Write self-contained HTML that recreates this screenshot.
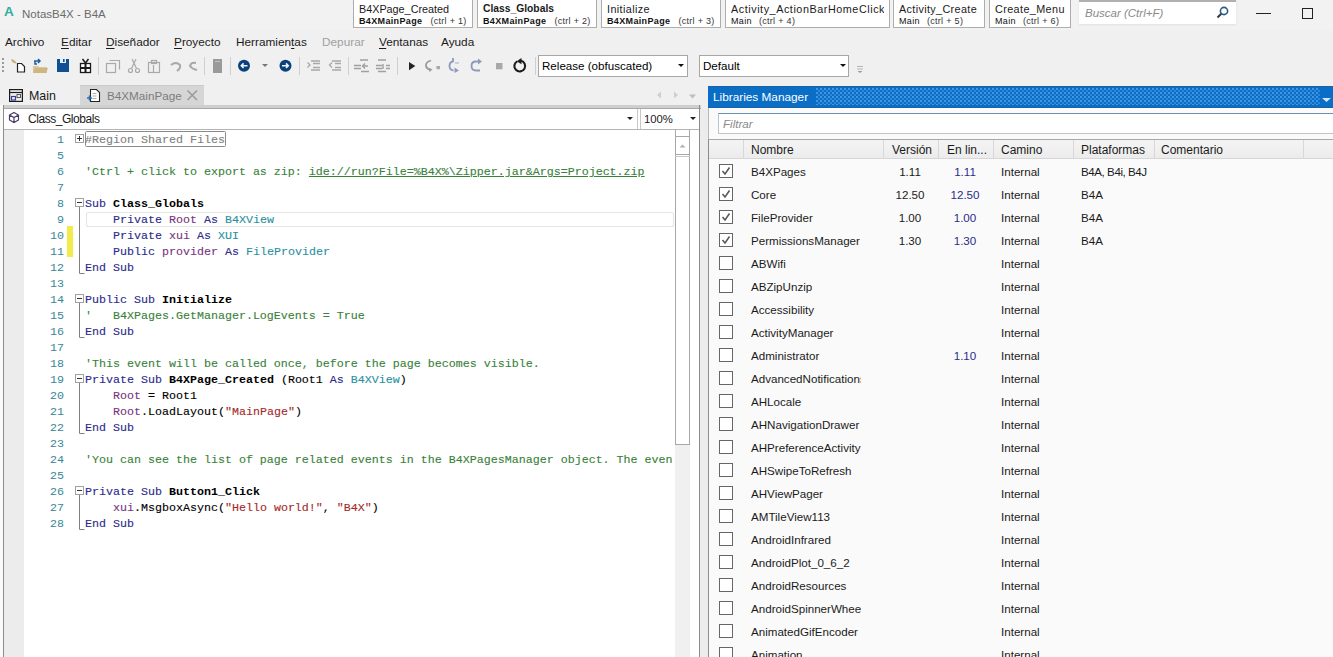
<!DOCTYPE html>
<html><head><meta charset="utf-8">
<style>
*{margin:0;padding:0;box-sizing:border-box}
html,body{width:1333px;height:657px;overflow:hidden;background:#f0f0f0;font-family:"Liberation Sans",sans-serif;font-size:12px;color:#000}
.a{position:absolute}
.t{position:absolute;white-space:nowrap;line-height:14px}
svg{position:absolute;overflow:visible}
.qt{position:absolute;top:-1px;height:29px;background:#fff;border:1px solid #adadad;overflow:hidden}
.qt .l1{position:absolute;left:5px;top:2px;font-size:10.8px;line-height:14px;color:#1a1a1a;white-space:nowrap}
.qt .l2{position:absolute;left:5px;top:16px;font-size:9px;letter-spacing:0.35px;line-height:11px;color:#111;white-space:nowrap}
.qt .l2.b{font-weight:bold;-webkit-text-stroke:0}
.qt .l2 span{color:#333;margin-left:8px;letter-spacing:0.3px}
.menu span{position:absolute;top:35px;font-size:11.8px;line-height:14px;color:#1b1b1b;white-space:nowrap}
.menu u{text-decoration:underline;text-underline-offset:1.5px;text-decoration-thickness:1px}
.sep{position:absolute;top:57px;width:1px;height:18px;background:#cfcfcf}
.code{position:absolute;left:85px;font-family:"Liberation Mono",monospace;font-size:11.67px;white-space:pre;line-height:16px;height:16px;color:#000;-webkit-text-stroke:0.12px currentColor}
.ln{position:absolute;right:1269px;font-family:"Liberation Mono",monospace;font-size:11.67px;white-space:pre;line-height:16px;color:#3a8599}
.k{color:#2b2b8c}.v{color:#7a3580}.ty{color:#2b91a0}.c{color:#3a823a}.s{color:#a52a2a}.b{font-weight:bold;-webkit-text-stroke:0}
.row{position:absolute;left:708px;width:625px;height:23px}
.cb{position:absolute;left:719px;width:14px;height:14px;border:1px solid #666;background:#fff}
.nm{position:absolute;left:751px;width:110px;overflow:hidden;white-space:nowrap;font-size:11.6px;line-height:14px;color:#1a1a1a}
.ver{position:absolute;width:60px;text-align:center;white-space:nowrap;font-size:11.6px;line-height:14px}
.cam{position:absolute;left:1001px;white-space:nowrap;font-size:11.6px;line-height:14px;color:#1a1a1a}
.pl{position:absolute;left:1081px;white-space:nowrap;font-size:11.6px;line-height:14px;color:#1a1a1a}
.hd{position:absolute;top:143px;white-space:nowrap;font-size:12px;line-height:14px;color:#1a1a1a}
.hs{position:absolute;top:140px;width:1px;height:19px;background:#d8d8d8}
</style></head><body>
<!-- ===== TITLE BAR ===== -->
<div class="a" style="left:0;top:0;width:1333px;height:30px;background:#f2f2f2"></div>
<div class="t" style="left:4px;top:5px;font-size:13.6px;font-weight:bold;color:#2fae9f">A</div>
<div class="t" style="left:22px;top:7px;font-size:11.5px;color:#6b6b6b">NotasB4X - B4A</div>

<div class="qt" style="left:353px;width:120px"><div class="l1">B4XPage_Created</div><div class="l2"><b>B4XMainPage</b><span>(ctrl + 1)</span></div></div>
<div class="qt" style="left:477px;width:120px"><div class="l1" style="font-weight:bold;font-size:10.3px">Class_Globals</div><div class="l2"><b>B4XMainPage</b><span>(ctrl + 2)</span></div></div>
<div class="qt" style="left:601px;width:120px"><div class="l1" style="letter-spacing:0.4px">Initialize</div><div class="l2"><b>B4XMainPage</b><span>(ctrl + 3)</span></div></div>
<div class="qt" style="left:725px;width:165px"><div class="l1" style="letter-spacing:0.55px;width:153px;overflow:hidden">Activity_ActionBarHomeClick</div><div class="l2">Main<span style="margin-left:7px">(ctrl + 4)</span></div></div>
<div class="qt" style="left:893px;width:92px"><div class="l1" style="letter-spacing:0.36px">Activity_Create</div><div class="l2">Main<span style="margin-left:7px">(ctrl + 5)</span></div></div>
<div class="qt" style="left:989px;width:82px"><div class="l1" style="letter-spacing:0.4px">Create_Menu</div><div class="l2">Main<span style="margin-left:7px">(ctrl + 6)</span></div></div>

<div class="a" style="left:1079px;top:0;width:157px;height:24px;background:#fff;border-top:2px solid #b0b0b0;box-shadow:0 1px 2px #e0e0e0"></div>
<div class="t" style="left:1085px;top:6px;font-size:11.5px;font-style:italic;color:#8a8a8a">Buscar (Ctrl+F)</div>
<svg style="left:1216px;top:5px" width="14" height="14"><circle cx="8" cy="6" r="3.6" fill="none" stroke="#2c5a86" stroke-width="1.6"/><line x1="5.3" y1="8.7" x2="1.5" y2="12.5" stroke="#2c3e50" stroke-width="2"/></svg>
<div class="a" style="left:1256px;top:13px;width:15px;height:1px;background:#222"></div>
<div class="a" style="left:1302px;top:8px;width:11px;height:11px;border:1px solid #222"></div>

<!-- ===== MENU ===== -->
<div class="menu">
<span style="left:5px">Archivo</span>
<span style="left:61px"><u>E</u>ditar</span>
<span style="left:106px"><u>D</u>iseñador</span>
<span style="left:174px"><u>P</u>royecto</span>
<span style="left:236px">Herramien<u>t</u>as</span>
<span style="left:322px;color:#a0a0a0">Depurar</span>
<span style="left:379px"><u>V</u>entanas</span>
<span style="left:441px">Ayuda</span>
</div>

<!-- ===== TOOLBAR ===== -->
<svg style="left:0;top:0" width="1333" height="84">
 <!-- grip -->
 <g fill="#9a9a9a"><rect x="2" y="58" width="2" height="2"/><rect x="2" y="62" width="2" height="2"/><rect x="2" y="66" width="2" height="2"/><rect x="2" y="70" width="2" height="2"/></g>
 <!-- new -->
 <path d="M11 59 L15 61 L13 63 Z" fill="#b9a56a"/><path d="M12 60 l4 3" stroke="#c8b27a" stroke-width="2"/>
 <path d="M17.5 63.5 h4 l3 3 v5.5 h-7 z" fill="#fff" stroke="#222" stroke-width="1.2"/>
 <!-- open -->
 <path d="M34 61 h6 M38 59 l2 2 l-2 2 M35 61 v3 l2 0" fill="none" stroke="#1d5ea8" stroke-width="1.5"/>
 <path d="M33 66 h5 l1 1 h8 v6 h-14 z" fill="#d9c79a"/><path d="M35 68 h13 l-2 5 h-13 z" fill="#cdb684"/>
 <!-- save -->
 <path d="M57 59 h12 v13 h-12 z" fill="#0f4f92"/><rect x="60" y="59" width="6" height="4" fill="#e6eef8"/><rect x="63" y="59" width="1.6" height="3" fill="#0f4f92"/>
 <!-- gift -->
 <rect x="80.5" y="63.5" width="10" height="9" fill="#fff" stroke="#1a1a1a" stroke-width="1.3"/><path d="M85.5 63 v10 M80 68 h11" stroke="#1a1a1a" stroke-width="2"/><path d="M82.5 59 l3 4 l3 -4" fill="none" stroke="#1a1a1a" stroke-width="1.5"/>
 <rect x="98" y="57" width="1" height="18" fill="#cfcfcf"/>
 <!-- copy -->
 <g fill="none" stroke="#a9a9a9" stroke-width="1.2"><rect x="106.5" y="63.5" width="9" height="9"/><path d="M109.5 60.5 h10 v9"/></g>
 <!-- cut -->
 <g fill="none" stroke="#a9a9a9" stroke-width="1.2"><circle cx="130.5" cy="70.5" r="2"/><circle cx="137.5" cy="70.5" r="2"/><path d="M131.5 68.5 L136 59 M136.5 68.5 L132 59"/></g>
 <!-- paste -->
 <g fill="none" stroke="#a9a9a9" stroke-width="1.2"><rect x="148.5" y="62.5" width="11" height="10"/><rect x="151.5" y="60.5" width="5" height="3"/><path d="M153.5 65 v7"/></g>
 <!-- undo redo -->
 <path d="M171 65 q5 -4 9 0 q1 3 -3 6" fill="none" stroke="#a9a9a9" stroke-width="2"/>
 <path d="M196 63 q-5 -1 -6 3 q2 3 7 4" fill="none" stroke="#a9a9a9" stroke-width="2"/>
 <rect x="204" y="57" width="1" height="18" fill="#cfcfcf"/>
 <rect x="213" y="59" width="9" height="14" fill="#9a9a9a"/><rect x="215" y="61" width="5" height="1" fill="#c0c0c0"/>
 <rect x="230" y="57" width="1" height="18" fill="#cfcfcf"/>
 <!-- back / fwd -->
 <circle cx="244" cy="65.7" r="6" fill="#0c4078"/><path d="M247.5 65.7 h-6 M243.6 63.4 l-2.3 2.3 l2.3 2.3" fill="none" stroke="#e8f4ff" stroke-width="1.6"/>
 <path d="M262 64 h6 l-3 3 z" fill="#777"/>
 <circle cx="285.5" cy="65.7" r="6" fill="#0c4078"/><path d="M282 65.7 h6 M286 63.4 l2.3 2.3 l-2.3 2.3" fill="none" stroke="#e8f4ff" stroke-width="1.6"/>
 <rect x="299" y="57" width="1" height="18" fill="#cfcfcf"/>
 <!-- indent/outdent -->
 <g stroke="#a8a8a8" stroke-width="1.3"><path d="M311 61 h9 M313 63.5 h7 M313 67.5 h7 M311 70 h9"/><path d="M307.5 62.5 l2.5 2.5 l-2.5 2.5" fill="none"/></g>
 <g stroke="#a8a8a8" stroke-width="1.3"><path d="M332 61 h9 M335 63.5 h6 M335 67.5 h6 M332 70 h9"/><path d="M332 62.5 l-2.5 2.5 l2.5 2.5" fill="none"/></g>
 <rect x="348" y="57" width="1" height="18" fill="#cfcfcf"/>
 <g stroke="#a0a0a0" stroke-width="1.4" fill="none"><path d="M360 60 h8 M354 65.5 h7 M354 68.5 h7 M361 71.5 h8"/><path d="M368 66 h-5 M365 63.5 l-2.5 2.5 l2.5 2.5"/></g>
 <g stroke="#a0a0a0" stroke-width="1.4" fill="none"><path d="M378 60 h8 M376 65.5 h6 M376 68.5 h6 M378 71.5 h8 M386 65.5 h4 M386 68.5 h4"/><path d="M383 64 v5"/></g>
 <rect x="397" y="57" width="1" height="18" fill="#cfcfcf"/>
 <!-- debug -->
 <path d="M409 62 l6.3 4.1 l-6.3 4.1 z" fill="#222"/>
 <path d="M431 60.5 q-5.5 1.5 -5 5.5 q0.5 2.5 3.5 3.5" fill="none" stroke="#9a9a9a" stroke-width="1.8"/><path d="M428.5 67.5 l4 2 l-3 2.5z" fill="#9a9a9a"/><rect x="436.5" y="66" width="3.5" height="3.2" fill="#a8a8a8"/>
 <path d="M453 58 v3.5 q-3.5 0.5 -3.5 4.5 q0 4 4 4.5" fill="none" stroke="#8f9ab8" stroke-width="1.8"/><path d="M454.5 67.5 l4.5 3 l-4.5 2.5z" fill="#8f9ab8"/><path d="M455 63 h4" stroke="#b6bfd8" stroke-width="1.4"/>
 <path d="M480 61.5 h-4 q-4.5 0 -4.5 4.5 q0 4.5 4.5 4.5 h4" fill="none" stroke="#8f9ab8" stroke-width="1.8"/><path d="M478 58.5 l4 3 l-4 3z" fill="#8f9ab8"/>
 <rect x="496" y="63" width="6.5" height="6.3" fill="#a8a8a8"/>
 <path d="M517.2 61.3 a5.4 5.4 0 1 0 3.8 -0.5" fill="none" stroke="#1a1a1a" stroke-width="2.1"/><path d="M521.5 58 l-4.8 3.2 l4.8 3z" fill="#1a1a1a"/>
 <rect x="535" y="57" width="1" height="18" fill="#cfcfcf"/>
 <!-- overflow -->
 <path d="M857 66.5 h6 M857 69 h6" stroke="#b5b5b5" stroke-width="1"/><path d="M857.5 71 h5 l-2.5 2z" fill="#9a9a9a"/>
</svg>

<!-- dropdowns -->
<div class="a" style="left:538px;top:55px;width:150px;height:22px;background:#fff;border:1px solid #a6a6a6"></div>
<div class="t" style="left:542px;top:59px;font-size:11.6px">Release (obfuscated)</div>
<div class="a" style="left:678px;top:64px;width:0;height:0;border-left:3px solid transparent;border-right:3px solid transparent;border-top:3px solid #111"></div>
<div class="a" style="left:699px;top:55px;width:150px;height:22px;background:#fff;border:1px solid #a6a6a6"></div>
<div class="t" style="left:703px;top:59px;font-size:11.6px">Default</div>
<div class="a" style="left:840px;top:64px;width:0;height:0;border-left:3px solid transparent;border-right:3px solid transparent;border-top:3px solid #111"></div>

<!-- ===== EDITOR TABS ===== -->
<div class="a" style="left:80px;top:85px;width:124px;height:20px;background:#d6d6d6;border-top:1px solid #cacaca"></div>
<svg style="left:0;top:0" width="260" height="110">
 <g fill="none" stroke="#1a1a1a" stroke-width="1.2"><rect x="9.6" y="89.6" width="12.8" height="11.8"/><path d="M9.6 92.5 h12.8"/></g>
 <rect x="11.5" y="96.5" width="4" height="3.5" fill="none" stroke="#3d3d9a" stroke-width="1.2"/><rect x="17" y="94.5" width="3.5" height="3" fill="none" stroke="#555" stroke-width="1"/>
 <path d="M90.5 89.5 h6 l3 3 v9 h-9 z" fill="#fff" stroke="#222" stroke-width="1.1"/><path d="M92.5 93.5 h4 M92.5 96 h4 M92.5 98.5 h4" stroke="#999" stroke-width="0.8"/>
 <path d="M87 98 h5 M89.5 95.5 v5" stroke="#2a6fc0" stroke-width="1.6"/>
 <path d="M187.5 90.5 l9.5 9.5 M197 90.5 l-9.5 9.5" stroke="#9c9c9c" stroke-width="1.6"/>
 <path d="M657 95 l4 -3.5 v7 z" fill="#cfcfcf"/><path d="M678 95 l-4 -3.5 v7 z" fill="#cfcfcf"/><path d="M689 94.5 h7 l-3.5 4 z" fill="#bdbdbd"/>
</svg>
<div class="t" style="left:29px;top:89px;font-size:12.4px;color:#1a1a1a">Main</div>
<div class="t" style="left:107px;top:89px;font-size:11.7px;color:#7c7c7c">B4XMainPage</div>

<!-- ===== EDITOR FRAME ===== -->
<div class="a" style="left:2px;top:105px;width:699px;height:552px;background:#fff"></div>
<div class="a" style="left:2px;top:105px;width:699px;height:4px;background:#cfcfcf"></div>
<div class="a" style="left:2px;top:108px;width:699px;height:1px;background:#a8a8a8"></div>
<div class="a" style="left:0px;top:105px;width:3px;height:552px;background:#fafafa"></div><div class="a" style="left:3px;top:105px;width:1px;height:552px;background:#8c8c8c"></div>
<div class="a" style="left:699px;top:105px;width:1px;height:552px;background:#8c8c8c"></div><div class="a" style="left:700px;top:109px;width:8px;height:548px;background:#ececec"></div>
<!-- combobox row -->
<div class="a" style="left:4px;top:129px;width:695px;height:1px;background:#b4b4b4"></div>
<div class="a" style="left:637px;top:109px;width:1px;height:20px;background:#c8c8c8"></div><div class="a" style="left:640px;top:109px;width:1px;height:20px;background:#c8c8c8"></div>
<svg style="left:0;top:0" width="700" height="135">
 <path d="M14 112.5 l4.5 2.5 v5 l-4.5 2.5 l-4.5 -2.5 v-5 z M9.5 115 l4.5 2.5 l4.5 -2.5 M14 117.5 v5" fill="none" stroke="#4a3a6a" stroke-width="1.2"/>
 <path d="M627 117 h6 l-3 3 z" fill="#222"/>
 <path d="M690 117 h6 l-3 3 z" fill="#222"/>
</svg>
<div class="t" style="left:28px;top:112px;font-size:12px;letter-spacing:-0.45px;color:#1a1a1a">Class_Globals</div>
<div class="t" style="left:644px;top:112px;font-size:11.3px;color:#1a1a1a">100%</div>
<!-- gutter -->
<div class="a" style="left:4px;top:130px;width:20px;height:527px;background:#ececec"></div>
<div class="a" style="left:67px;top:226px;width:6px;height:31px;background:#f3eb4a"></div>
<!-- scrollbar -->
<div class="a" style="left:675px;top:130px;width:15px;height:527px;background:#f0f0f0"></div>
<div class="a" style="left:675px;top:130px;width:15px;height:315px;background:#fff;border:1px solid #a8a8a8;border-top:none"></div>
<div class="a" style="left:675px;top:136px;width:15px;height:1px;background:#a8a8a8"></div>
<div class="a" style="left:675px;top:154px;width:15px;height:1px;background:#a8a8a8"></div>
<div class="a" style="left:675px;top:156px;width:15px;height:1px;background:#c8c8c8"></div>
<svg style="left:0;top:0" width="700" height="160"><path d="M679.5 147.5 h6 l-3 -3 z" fill="#b0b0b0"/></svg>
<!-- fold markers -->
<svg style="left:0;top:0" width="700" height="657">
 <g fill="#fff" stroke="#a0a0a0" stroke-width="1"><rect x="75.5" y="134.5" width="8" height="8"/><rect x="75.5" y="198.5" width="8" height="8"/><rect x="75.5" y="294.5" width="8" height="8"/><rect x="75.5" y="374.5" width="8" height="8"/><rect x="75.5" y="486.5" width="8" height="8"/></g>
 <g stroke="#333" stroke-width="1"><path d="M77 138.5 h5 M79.5 136 v5"/><path d="M77 202.5 h5"/><path d="M77 298.5 h5"/><path d="M77 378.5 h5"/><path d="M77 490.5 h5"/></g>
 <g fill="none" stroke="#808080" stroke-width="1"><path d="M79.5 207 v66.5 h5"/><path d="M79.5 303 v34.5 h5"/><path d="M79.5 383 v50.5 h5"/><path d="M79.5 495 v34.5 h5"/></g>
 <rect x="85.5" y="131.5" width="140" height="15" fill="none" stroke="#8a8a8a" stroke-width="1" rx="1"/>
 <rect x="86.5" y="212.5" width="587" height="14" fill="none" stroke="#e6e6e6" stroke-width="1.2" rx="2"/>
</svg>
<!-- line numbers -->
<div class="ln" style="top:132px">1</div>
<div class="ln" style="top:148px">5</div>
<div class="ln" style="top:164px">6</div>
<div class="ln" style="top:180px">7</div>
<div class="ln" style="top:196px">8</div>
<div class="ln" style="top:212px">9</div>
<div class="ln" style="top:228px">10</div>
<div class="ln" style="top:244px">11</div>
<div class="ln" style="top:260px">12</div>
<div class="ln" style="top:276px">13</div>
<div class="ln" style="top:292px">14</div>
<div class="ln" style="top:308px">15</div>
<div class="ln" style="top:324px">16</div>
<div class="ln" style="top:340px">17</div>
<div class="ln" style="top:356px">18</div>
<div class="ln" style="top:372px">19</div>
<div class="ln" style="top:388px">20</div>
<div class="ln" style="top:404px">21</div>
<div class="ln" style="top:420px">22</div>
<div class="ln" style="top:436px">23</div>
<div class="ln" style="top:452px">24</div>
<div class="ln" style="top:468px">25</div>
<div class="ln" style="top:484px">26</div>
<div class="ln" style="top:500px">27</div>
<div class="ln" style="top:516px">28</div>
<!-- code -->
<div class="code" style="top:132px;color:#808080">#Region Shared Files</div>
<div class="code c" style="top:164px">'Ctrl + click to export as zip: <span style="text-decoration:underline">ide://run?File=%B4X%\Zipper.jar&amp;Args=Project.zip</span></div>
<div class="code" style="top:196px"><span class="k">Sub</span> <span class="b">Class_Globals</span></div>
<div class="code" style="top:212px">    <span class="k">Private</span> <span class="v">Root</span> <span class="k">As</span> <span class="ty">B4XView</span></div>
<div class="code" style="top:228px">    <span class="k">Private</span> <span class="v">xui</span> <span class="k">As</span> <span class="ty">XUI</span></div>
<div class="code" style="top:244px">    <span class="k">Public</span> <span class="v">provider</span> <span class="k">As</span> <span class="ty">FileProvider</span></div>
<div class="code" style="top:260px"><span class="k">End Sub</span></div>
<div class="code" style="top:292px"><span class="k">Public Sub</span> <span class="b">Initialize</span></div>
<div class="code c" style="top:308px">'   B4XPages.GetManager.LogEvents = True</div>
<div class="code" style="top:324px"><span class="k">End Sub</span></div>
<div class="code c" style="top:356px">'This event will be called once, before the page becomes visible.</div>
<div class="code" style="top:372px"><span class="k">Private Sub</span> <span class="b">B4XPage_Created</span> (Root1 <span class="k">As</span> <span class="ty">B4XView</span>)</div>
<div class="code" style="top:388px">    <span class="v">Root</span> = Root1</div>
<div class="code" style="top:404px">    <span class="v">Root</span>.LoadLayout(<span class="s">"MainPage"</span>)</div>
<div class="code" style="top:420px"><span class="k">End Sub</span></div>
<div class="code c" style="top:452px;width:588px;overflow:hidden">'You can see the list of page related events in the B4XPagesManager object. The event</div>
<div class="code" style="top:484px"><span class="k">Private Sub</span> <span class="b">Button1_Click</span></div>
<div class="code" style="top:500px">    <span class="v">xui</span>.MsgboxAsync(<span class="s">"Hello world!"</span>, <span class="s">"B4X"</span>)</div>
<div class="code" style="top:516px"><span class="k">End Sub</span></div>

<!-- ===== LIBRARIES MANAGER ===== -->
<div class="a" style="left:708px;top:86px;width:625px;height:571px;background:#fafafa"></div>
<div class="a" style="left:708px;top:86px;width:625px;height:22px;background:#0a6ec6;border-top:1px solid #1a62a2;border-bottom:1px solid #1a62a2"></div>
<div class="a" style="left:816px;top:88px;width:504px;height:17px;background-image:radial-gradient(circle at 1px 1px,#3d97e6 0.9px,transparent 1.1px),radial-gradient(circle at 1px 1px,#2f88d8 0.9px,transparent 1.1px);background-size:4px 4px,4px 4px;background-position:0 0,2px 2px"></div>
<div class="t" style="left:713px;top:90px;font-size:11.8px;color:#fff">Libraries Manager</div>
<svg style="left:0;top:0" width="1333" height="120"><path d="M1322 98 h9 l-4.5 4 z" fill="#cfe6fb"/></svg>
<div class="a" style="left:718px;top:113px;width:615px;height:21px;background:#fff;border-top:1px solid #6e8fae;border-left:1px solid #b5c6d6;border-bottom:1px solid #c5c5c5"></div>
<div class="a" style="left:708px;top:108px;width:1px;height:31px;background:#b8b8b8"></div>
<div class="t" style="left:723px;top:117px;font-size:11.6px;font-style:italic;color:#8a8a8a">Filtrar</div>
<div class="a" style="left:708px;top:139px;width:625px;height:518px;background:#fafafa;border-left:1px solid #8c8c8c;border-top:1px solid #a8a8a8"></div>
<div class="a" style="left:709px;top:140px;width:624px;height:19px;background:linear-gradient(#f4f4f4,#ececec);border-bottom:1px solid #d6d6d6"></div>
<div class="hs" style="left:743px"></div><div class="hs" style="left:883px"></div><div class="hs" style="left:938px"></div><div class="hs" style="left:993px"></div><div class="hs" style="left:1073px"></div><div class="hs" style="left:1154px"></div><div class="hs" style="left:1303px"></div>
<div class="hd" style="left:751px">Nombre</div>
<div class="hd" style="left:892px">Versión</div>
<div class="hd" style="left:947px">En lin...</div>
<div class="hd" style="left:1001px">Camino</div>
<div class="hd" style="left:1081px">Plataformas</div>
<div class="hd" style="left:1161px">Comentario</div>

<div class="cb" style="top:164px"></div>
<svg style="left:719px;top:164px" width="14" height="14"><path d="M3.5 7 l2.5 3 l4.5 -6.5" fill="none" stroke="#555" stroke-width="1.5"/></svg>
<div class="nm" style="top:165px">B4XPages</div>
<div class="ver" style="left:880px;top:165px;color:#1a1a1a">1.11</div>
<div class="ver" style="left:935px;top:165px;color:#2a2a8a">1.11</div>
<div class="cam" style="top:165px">Internal</div>
<div class="pl" style="top:165px;letter-spacing:-0.45px">B4A, B4i, B4J</div>
<div class="cb" style="top:187px"></div>
<svg style="left:719px;top:187px" width="14" height="14"><path d="M3.5 7 l2.5 3 l4.5 -6.5" fill="none" stroke="#555" stroke-width="1.5"/></svg>
<div class="nm" style="top:188px">Core</div>
<div class="ver" style="left:880px;top:188px;color:#1a1a1a">12.50</div>
<div class="ver" style="left:935px;top:188px;color:#2a2a8a">12.50</div>
<div class="cam" style="top:188px">Internal</div>
<div class="pl" style="top:188px">B4A</div>
<div class="cb" style="top:210px"></div>
<svg style="left:719px;top:210px" width="14" height="14"><path d="M3.5 7 l2.5 3 l4.5 -6.5" fill="none" stroke="#555" stroke-width="1.5"/></svg>
<div class="nm" style="top:211px">FileProvider</div>
<div class="ver" style="left:880px;top:211px;color:#1a1a1a">1.00</div>
<div class="ver" style="left:935px;top:211px;color:#2a2a8a">1.00</div>
<div class="cam" style="top:211px">Internal</div>
<div class="pl" style="top:211px">B4A</div>
<div class="cb" style="top:233px"></div>
<svg style="left:719px;top:233px" width="14" height="14"><path d="M3.5 7 l2.5 3 l4.5 -6.5" fill="none" stroke="#555" stroke-width="1.5"/></svg>
<div class="nm" style="top:234px">PermissionsManager</div>
<div class="ver" style="left:880px;top:234px;color:#1a1a1a">1.30</div>
<div class="ver" style="left:935px;top:234px;color:#2a2a8a">1.30</div>
<div class="cam" style="top:234px">Internal</div>
<div class="pl" style="top:234px">B4A</div>
<div class="cb" style="top:256px"></div>
<div class="nm" style="top:257px">ABWifi</div>
<div class="cam" style="top:257px">Internal</div>
<div class="cb" style="top:279px"></div>
<div class="nm" style="top:280px">ABZipUnzip</div>
<div class="cam" style="top:280px">Internal</div>
<div class="cb" style="top:302px"></div>
<div class="nm" style="top:303px">Accessibility</div>
<div class="cam" style="top:303px">Internal</div>
<div class="cb" style="top:325px"></div>
<div class="nm" style="top:326px">ActivityManager</div>
<div class="cam" style="top:326px">Internal</div>
<div class="cb" style="top:348px"></div>
<div class="nm" style="top:349px">Administrator</div>
<div class="ver" style="left:935px;top:349px;color:#2a2a8a">1.10</div>
<div class="cam" style="top:349px">Internal</div>
<div class="cb" style="top:371px"></div>
<div class="nm" style="top:372px">AdvancedNotifications</div>
<div class="cam" style="top:372px">Internal</div>
<div class="cb" style="top:394px"></div>
<div class="nm" style="top:395px">AHLocale</div>
<div class="cam" style="top:395px">Internal</div>
<div class="cb" style="top:417px"></div>
<div class="nm" style="top:418px">AHNavigationDrawer</div>
<div class="cam" style="top:418px">Internal</div>
<div class="cb" style="top:440px"></div>
<div class="nm" style="top:441px">AHPreferenceActivity</div>
<div class="cam" style="top:441px">Internal</div>
<div class="cb" style="top:463px"></div>
<div class="nm" style="top:464px">AHSwipeToRefresh</div>
<div class="cam" style="top:464px">Internal</div>
<div class="cb" style="top:486px"></div>
<div class="nm" style="top:487px">AHViewPager</div>
<div class="cam" style="top:487px">Internal</div>
<div class="cb" style="top:509px"></div>
<div class="nm" style="top:510px">AMTileView113</div>
<div class="cam" style="top:510px">Internal</div>
<div class="cb" style="top:532px"></div>
<div class="nm" style="top:533px">AndroidInfrared</div>
<div class="cam" style="top:533px">Internal</div>
<div class="cb" style="top:555px"></div>
<div class="nm" style="top:556px">AndroidPlot_0_6_2</div>
<div class="cam" style="top:556px">Internal</div>
<div class="cb" style="top:578px"></div>
<div class="nm" style="top:579px">AndroidResources</div>
<div class="cam" style="top:579px">Internal</div>
<div class="cb" style="top:601px"></div>
<div class="nm" style="top:602px">AndroidSpinnerWheel</div>
<div class="cam" style="top:602px">Internal</div>
<div class="cb" style="top:624px"></div>
<div class="nm" style="top:625px">AnimatedGifEncoder</div>
<div class="cam" style="top:625px">Internal</div>
<div class="cb" style="top:647px"></div>
<div class="nm" style="top:648px">Animation</div>
<div class="cam" style="top:648px">Internal</div>
</body></html>
